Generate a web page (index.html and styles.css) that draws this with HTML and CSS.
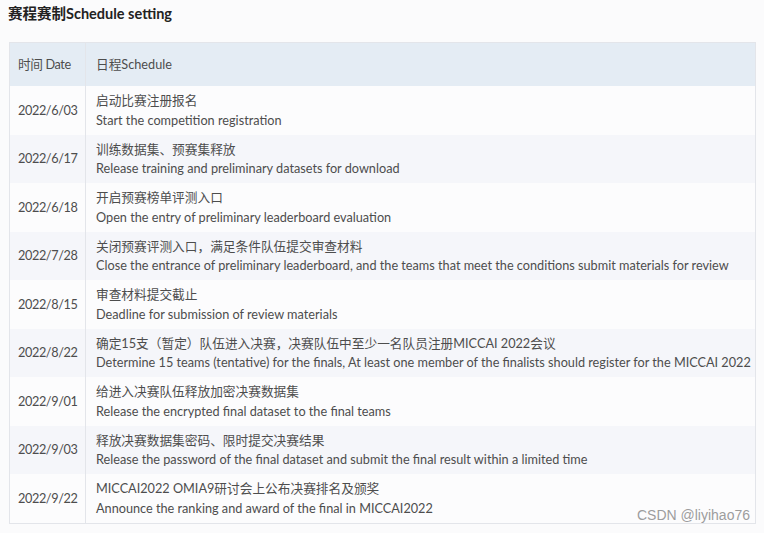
FILE: index.html
```html
<!DOCTYPE html>
<html lang="zh">
<head>
    <meta charset="utf-8">
    <title>赛程赛制Schedule setting</title>
    <meta name="viewport" content="width=device-width, initial-scale=1">
    <link rel="stylesheet" href="styles.css">
</head>
<body>
    <div class="page">
        <h3 class="title">赛程赛制Schedule setting</h3>
        <div class="table-wrap">
            <table class="schedule">
                <colgroup>
                    <col class="col-date">
                    <col>
                </colgroup>
                <thead>
                    <tr>
                        <th class="date">时间 Date</th>
                        <th>日程Schedule</th>
                    </tr>
                </thead>
                <tbody>
                    <tr>
                        <td class="date">2022/6/03</td>
                        <td>启动比赛注册报名<br>Start the competition registration</td>
                    </tr>
                    <tr>
                        <td class="date">2022/6/17</td>
                        <td>训练数据集、预赛集释放<br>Release training and preliminary datasets for download</td>
                    </tr>
                    <tr>
                        <td class="date">2022/6/18</td>
                        <td>开启预赛榜单评测入口<br>Open the entry of preliminary leaderboard evaluation</td>
                    </tr>
                    <tr>
                        <td class="date">2022/7/28</td>
                        <td>关闭预赛评测入口，满足条件队伍提交审查材料<br>Close the entrance of preliminary leaderboard, and the teams that meet the conditions submit materials for review</td>
                    </tr>
                    <tr>
                        <td class="date">2022/8/15</td>
                        <td>审查材料提交截止<br>Deadline for submission of review materials</td>
                    </tr>
                    <tr>
                        <td class="date">2022/8/22</td>
                        <td>确定15支（暂定）队伍进入决赛，决赛队伍中至少一名队员注册MICCAI 2022会议<br>Determine 15 teams (tentative) for the finals, At least one member of the finalists should register for the MICCAI 2022</td>
                    </tr>
                    <tr>
                        <td class="date">2022/9/01</td>
                        <td>给进入决赛队伍释放加密决赛数据集<br>Release the encrypted final dataset to the final teams</td>
                    </tr>
                    <tr>
                        <td class="date">2022/9/03</td>
                        <td>释放决赛数据集密码、限时提交决赛结果<br>Release the password of the final dataset and submit the final result within a limited time</td>
                    </tr>
                    <tr>
                        <td class="date">2022/9/22</td>
                        <td>MICCAI2022 OMIA9研讨会上公布决赛排名及颁奖<br>Announce the ranking and award of the final in MICCAI2022</td>
                    </tr>
                </tbody>
            </table>
            <span class="watermark">CSDN @liyihao76</span>
        </div>
    </div>
</body>
</html>
```

FILE: styles.css
```css
body {
    margin: 0;
    background: #fbfbfc;
    font-family: Lato, "Noto Sans CJK SC", sans-serif;
    color: #4d4d4d;
}
.page {
    padding: 0 8px 0 9px;
}
.title {
    margin: 0 0 0 -1px;
    padding: 4px 0 0 0;
    height: 38px;
    font-size: 14.5px;
    font-weight: 700;
    color: #222;
    line-height: 20px;
}
.table-wrap {
    position: relative;
}
.schedule {
    width: 100%;
    table-layout: fixed;
    border-collapse: collapse;
    border: 1px solid #e3e5ea;
    font-size: 12.7px;
    line-height: 19.5px;
}
.col-date {
    width: 76px;
}
.schedule th {
    background: #e4ecf4;
    font-weight: 400;
    text-align: left;
    height: 43px;
    padding: 0 4px 0 10px;
}
.schedule td {
    padding: 5px 4px 4.5px 10px;
    height: 39px;
}
.schedule .date {
    padding-left: 8px;
    white-space: nowrap;
    letter-spacing: -0.4px;
    border-right: 1px solid #e3e5ea;
}
.schedule tbody tr:nth-child(odd) {
    background: #fcfcfd;
}
.schedule tbody tr:nth-child(even) {
    background: #f5f6fa;
}
.watermark {
    position: absolute;
    right: 6px;
    bottom: 1px;
    font-family: "Liberation Sans", Arial, sans-serif;
    font-size: 14px;
    color: #9d9d9d;
}
```
